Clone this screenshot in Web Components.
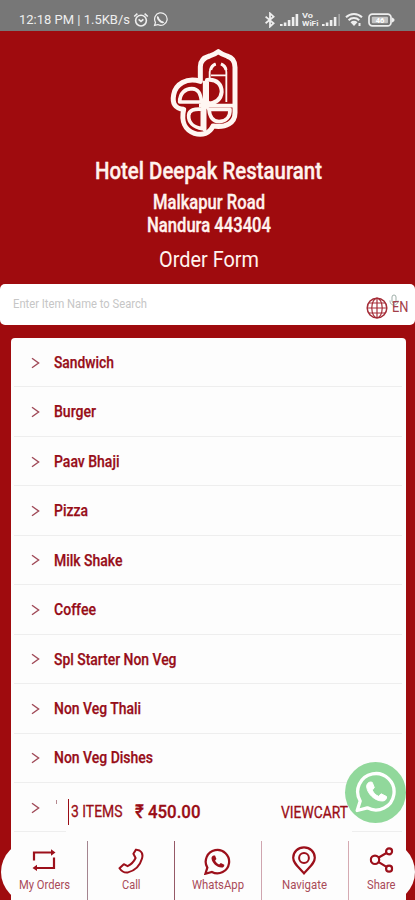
<!DOCTYPE html>
<html lang="en">
<head>
<meta charset="utf-8">
<title>Order Form</title>
<style>
html,body{margin:0;height:100%;overflow:hidden;background:#9f0b0e}
</style>
</head>
<body>
<order-app></order-app>
<script>
const define = (name, html, ready) => {
  const t = document.createElement('template');
  t.innerHTML = html;
  customElements.define(name, class extends HTMLElement {
    constructor() {
      super();
      this.attachShadow({mode: 'open'}).append(t.content.cloneNode(true));
    }
    connectedCallback() { if (ready) ready(this, this.shadowRoot); }
  });
};

/* Condensed label: squeezes its text to the width given in "w". */
define('fit-text', `<style>
:host{display:block;flex:none;white-space:nowrap;line-height:1.2}
span{display:inline-block;transform-origin:0 50%}
</style><span></span>`, (el, root) => {
  const s = root.querySelector('span');
  const w = +el.getAttribute('w');
  s.textContent = el.getAttribute('text');
  el.style.width = w + 'px';
  el.style.fontSize = el.getAttribute('size') + 'px';
  s.style.transform = `scaleX(${w / s.getBoundingClientRect().width})`;
});

define('status-bar', `<style>
:host{display:flex;box-sizing:border-box;height:31px;flex:none;background:#777;color:#eee;padding:8px 20px 0 19px;align-items:center}
svg{display:block;flex:none}
.sp{flex:1}
.vo{display:flex;flex-direction:column;font-weight:700;width:17px;margin-left:3px}
.vo fit-text{height:8px;line-height:8px}
</style>
<fit-text w="111" size="13.2" text="12:18 PM | 1.5KB/s"></fit-text>
<svg style="margin-left:3px" width="16" height="16" viewBox="0 0 16 16" fill="none" stroke="#eee" stroke-width="1.6"><circle cx="8" cy="8.6" r="5.4"/><path d="M1.2 4.5 4.4 1.6M14.8 4.5 11.6 1.6M5.6 7.4 8 9.4l2.4-2"/></svg>
<svg style="margin-left:4px" width="15" height="15" viewBox="0 0 24 24" fill="none" stroke="#eee" stroke-width="2"><path d="M2.5 21.5 4 16.5a10 10 0 1 1 3.7 3.6z"/><path d="M8.2 7.2c-1.2 1.6-.3 3.7 2.4 6.4 2.8 2.7 4.8 3.5 6.2 2" stroke-width="3"/></svg>
<div class="sp"></div>
<svg width="12" height="16" viewBox="0 0 12 16" fill="none" stroke="#eee" stroke-width="1.8"><path d="M1.6 4.6 9.6 11.2 6 14.6V1.4l3.6 3.3-8 6.6"/></svg>
<svg style="margin-left:4px" width="19" height="14" viewBox="0 0 19 14" fill="#eee"><path d="M0 11h2.6v2H0zM3.8 9.5h2.6V13H3.8zM7.8 7h2.6v6H7.8zM11.8 4h2.6v9h-2.6zM15.6 1h2.6v12h-2.6z"/></svg>
<div class="vo"><fit-text w="11" size="6.8" text="Vo"></fit-text><fit-text w="16.5" size="6.8" text="WiFi"></fit-text></div>
<svg style="margin-left:3px" width="19" height="14" viewBox="0 0 19 14" fill="#eee"><path d="M0 11h2.6v2H0zM3.8 9.5h2.6V13H3.8zM7.8 7h2.6v6H7.8zM11.8 4h2.6v9h-2.6z"/><path d="M16.4 1h1.5v12h-1.5z" fill="#aaa"/></svg>
<svg style="margin-left:4px" width="18" height="15" viewBox="0 0 18 15" fill="none" stroke="#eee" stroke-width="2"><path d="M1 5.2a11.5 11.5 0 0 1 16 0M3.6 8.2a7.6 7.6 0 0 1 10.6 0"/><path d="M5.5 10.2a5 5 0 0 1 7 0L9 14zM13.5 11h2v3h-2z" fill="#eee" stroke="none"/></svg>
<svg style="margin-left:5px" width="27" height="14" viewBox="0 0 27 14"><rect x="1" y="1.2" width="22" height="11.6" rx="3.4" fill="none" stroke="#eee" stroke-width="1.7"/><path d="M23.8 4.2 26.4 6v2l-2.6 1.8z" fill="#eee"/><rect x="3.8" y="3.8" width="16.2" height="6.4" rx="1" fill="#c4c4c4"/><text x="12" y="9.7" font-size="7.5" font-weight="700" text-anchor="middle" fill="#fff">46</text></svg>`);

define('shop-header', `<style>
:host{display:flex;flex-direction:column;align-items:center;box-sizing:border-box;padding-left:2px;flex:none;height:252.5px;color:#fff3ee}
svg{display:block;margin:15px 5px 0 0}
.b{font-weight:500;-webkit-text-stroke:.35px currentColor}
</style>
<svg width="74" height="94" viewBox="0 0 222 282" fill="none" stroke="#fff6f2" stroke-linejoin="round">
<path d="M94 98V62C94 42 108 34 122 30 134 26 142 22 148 17 154 22 162 26 174 30 188 34 198 44 198 64V200C198 230 172 246 132 240 122 262 100 270 76 262 48 252 36 226 44 190 18 188 9 172 14 146 20 114 52 94 94 106z" stroke-width="15"/>
<path d="M114 102C146 98 158 118 158 138 156 160 140 172 114 174z" stroke-width="12"/>
<path d="M32 168C32 140 50 128 68 128 88 129 94 140 98 168z" stroke-width="11"/>
<path d="M100 190V248C72 244 58 228 59 208 60 192 76 188 100 190z" stroke-width="11"/>
<path d="M120 190H183C184 212 172 226 150 227 130 226 122 212 120 190z" stroke-width="11"/>
<path d="M90 179H192M107 104V256" stroke-width="11"/>
<path d="M96 168 122 192M122 166 94 192" stroke-width="9"/>
<path d="M140 54C130 58 124 66 122 78V98M156 54C166 58 172 66 172 78V168M126 88H170" stroke-width="5.500"/>
<path d="M140 54C130 58 126 66 125 72M156 54C166 58 170 66 171 72" stroke-width="9"/>
</svg>
<fit-text class="b" style="margin-top:16.5px" w="227" size="23.5" text="Hotel Deepak Restaurant"></fit-text>
<fit-text class="b" style="margin-top:6.500px" w="112" size="19.500" text="Malkapur Road"></fit-text>
<fit-text class="b" style="margin-top:-.5px" w="124" size="19.500" text="Nandura 443404"></fit-text>
<fit-text style="margin-top:9px" w="100" size="22.500" text="Order Form"></fit-text>`);

define('search-box', `<style>
:host{display:flex;box-sizing:border-box;flex:none;height:41.5px;background:#fff;border-radius:5px;padding:0 7px 0 13px;color:#c6c6c6;align-items:center;justify-content:space-between}
.ph{margin-top:-2px}
.lang{display:flex;align-items:center;position:relative;color:#a33e4a;margin-top:7px;gap:4px}
.mic{position:absolute;left:23px;top:-3px}
svg{display:block}
</style>
<fit-text class="ph" w="134" size="13.500" text="Enter Item Name to Search"></fit-text>
<div class="lang">
<svg width="22" height="22" viewBox="0 0 22 22" fill="none" stroke="#a52d38" stroke-width="1.200"><circle cx="11" cy="11" r="9.800" stroke-width="1.500"/><ellipse cx="11" cy="11" rx="5.200" ry="9.800"/><path d="M11 1v20M1 11h20M2.800 6h16.400M2.800 16h16.400"/></svg>
<svg class="mic" width="10" height="14" viewBox="0 0 10 14" fill="none" stroke="#9fafa9"><rect x="3" y="1" width="4" height="8" rx="2"/><path d="M1 6.500C1 10 3 11 5 11s4-1 4-4.500M5 11v2.500"/></svg>
<fit-text w="16.500" size="14" text="EN"></fit-text>
</div>`);

define('menu-row', `<style>
:host{display:flex;box-sizing:border-box;height:49.45px;align-items:center;margin:0 4px 0 3px;padding:1px 0 0 16.5px;border-bottom:1.5px solid #eee;color:#970d18}
svg{display:block;margin-right:14px}
fit-text{font-weight:500;-webkit-text-stroke:.25px currentColor}
</style>
<svg width="9" height="12" viewBox="0 0 9 12" fill="none" stroke="#a04a58" stroke-width="1.400"><path d="M1 1.200 7.600 6 1 10.800"/></svg>`, (el, root) => {
  const f = document.createElement('fit-text');
  for (const k of ['w', 'text']) f.setAttribute(k, el.getAttribute(k));
  f.setAttribute('size', '16.3');
  root.append(f);
});

define('menu-card', `<style>
:host{display:block;flex:1;margin:13px 9.5px 0 11px;background:#fdfdfd;border-radius:4px 4px 0 0}
</style><slot></slot>`);

define('cart-bar', `<style>
:host{display:flex;position:absolute;left:66px;top:790px;width:286px;height:47px;background:#fdfdfd;color:#9a0d16;box-sizing:border-box;padding:0 4px 2px 1.500px;align-items:center}
i{width:1.700px;height:26px;background:#9a0d16;margin-right:2px;margin-top:-2px}
fit-text{font-weight:400;-webkit-text-stroke:.3px currentColor}
.price{margin-left:12.5px;font-weight:500}
.go{margin-left:auto}
</style><i></i>
<fit-text w="51.500" size="15.800" text="3 ITEMS"></fit-text>
<fit-text class="price" w="65.500" size="19" text="₹ 450.00"></fit-text>
<fit-text class="go" w="67" size="16" text="VIEWCART"></fit-text>`);

define('chat-button', `<style>
:host{display:flex;position:absolute;left:345px;top:762px;width:61px;height:61px;border-radius:50%;background:#91d89b;align-items:center;justify-content:center}
svg{display:block;transform:translateY(-1.500px)}
</style>
<svg width="42" height="42" viewBox="0 0 42 42"><path d="M2.200 40 5.200 30.500A18.200 18.200 0 1 1 12.300 37.300z" fill="none" stroke="#fff" stroke-width="3.300" stroke-linejoin="round"/><path d="M15.500 11.500c-2.300.1-4.100 2.200-3.800 5C12.500 23.500 20 30.700 27.500 30.500c2.600 0 4.500-2 4-4.500l-5.300-2.700-2.700 2.500C20.600 24.600 18.400 22.300 17.300 19.600l2-2.500-2.100-5.300z" fill="#fff" stroke="#fff" stroke-linejoin="round"/></svg>`);

define('nav-tab', `<style>
:host{display:flex;flex-direction:column;align-items:center;box-sizing:border-box;padding-top:4px;border-right:1.500px solid var(--line,#c3a0a8);color:#a94b58;flex:none}
:host([last]){border:0}
div{height:32px;display:flex;align-items:center;justify-content:center}
</style><div><slot></slot></div>`, (el, root) => {
  const f = document.createElement('fit-text');
  for (const k of ['w', 'text']) f.setAttribute(k, el.getAttribute(k));
  f.setAttribute('size', '12.6');
  root.append(f);
});

define('bottom-nav', `<style>
:host{display:flex;position:absolute;left:1px;top:841px;width:413.500px;height:62px;background:#fdfdfd;border-radius:31px/31px}
svg{display:block;fill:none;stroke:#9c101b;stroke-width:2.200}
</style>
<nav-tab style="width:87px;--line:#a48590" w="51" text="My Orders"><svg width="24" height="22" viewBox="0 0 24 22" style="transform:translateY(-1px)"><path d="M2 11.500V3.500h19M22 8.500V19H3"/><path d="M19 .3l4.500 3.200L19 6.700zM5 15.800.5 19 5 22z" fill="#9c101b" stroke="none"/></svg></nav-tab>
<nav-tab style="width:86.500px;--line:#955967" w="18.500" text="Call"><svg width="26" height="26" viewBox="0 0 26 26"><path d="M18 1.600 21.500 2.500C24.800 4.500 24.800 7.800 24 10.500 22 17.500 17.500 22.500 10 24.400 6.500 25 4 23.800 1.500 20.200L5.800 16.200 9.600 18.200C13 16.500 15.800 13.800 17.600 10L15.400 5.800z" stroke-linejoin="round" stroke-width="2"/></svg></nav-tab>
<nav-tab style="width:87px;--line:#cfa5af" w="52" text="WhatsApp"><svg width="27" height="27" viewBox="0 0 42 42"><path d="M2.200 40 5.200 30.500A18.200 18.200 0 1 1 12.300 37.300z" stroke-width="3.500"/><path d="M15.500 11.500c-2.300.1-4.100 2.200-3.800 5C12.500 23.500 20 30.700 27.500 30.500c2.600 0 4.500-2 4-4.500l-5.300-2.700-2.700 2.500C20.600 24.600 18.400 22.300 17.300 19.600l2-2.500-2.100-5.300z" fill="#9c101b" stroke="none"/></svg></nav-tab>
<nav-tab style="width:87px;--line:#d5aab2" w="45" text="Navigate"><svg width="26" height="29" viewBox="0 0 26 29" style="transform:translate(-1px,-1px)"><path d="M13 27.400C7 20.500 2.200 17 2.200 11.700a10.800 10.300 0 0 1 21.600 0C23.800 17 19 20.500 13 27.400z"/><circle cx="13" cy="12" r="4.900" stroke-width="2"/></svg></nav-tab>
<nav-tab last style="width:66px" w="28.500" text="Share"><svg width="24" height="26" viewBox="0 0 24 26" style="transform:translate(-.500px,-1px)"><circle cx="5.500" cy="12.800" r="4.200"/><circle cx="19.600" cy="4.300" r="3"/><circle cx="19.600" cy="21.700" r="3"/><path d="M9.200 10.500 17 6M9.200 15.100l7.800 4.800"/></svg></nav-tab>`);

define('order-app', `<style>
:host{display:flex;flex-direction:column;position:relative;width:415px;height:900px;overflow:hidden;background:#9f0b0e;font-family:Roboto,"Liberation Sans",sans-serif}
.peek{position:absolute;left:55.500px;top:800px;width:1px;height:4px;background:#b58990}
</style>
<status-bar></status-bar>
<shop-header></shop-header>
<search-box></search-box>
<menu-card>
<menu-row w="60" text="Sandwich"></menu-row>
<menu-row w="42" text="Burger"></menu-row>
<menu-row w="65.500" text="Paav Bhaji"></menu-row>
<menu-row w="34" text="Pizza"></menu-row>
<menu-row w="68.500" text="Milk Shake"></menu-row>
<menu-row w="42" text="Coffee"></menu-row>
<menu-row w="122.500" text="Spl Starter Non Veg"></menu-row>
<menu-row w="87" text="Non Veg Thali"></menu-row>
<menu-row w="99" text="Non Veg Dishes"></menu-row>
<menu-row w="0" text=""></menu-row>
</menu-card>
<span class="peek"></span>
<cart-bar></cart-bar>
<bottom-nav></bottom-nav>
<chat-button></chat-button>`);
</script>
</body>
</html>
